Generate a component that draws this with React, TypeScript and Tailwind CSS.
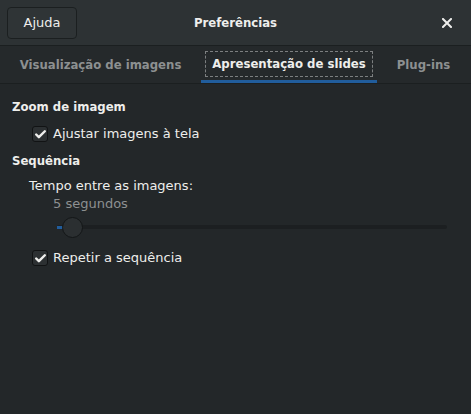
import { Check } from "lucide-react";

const font = { fontFamily: '"DejaVu Sans", sans-serif' };
const boldFont = {
  fontFamily: '"DejaVu Sans Condensed", "DejaVu Sans", sans-serif',
};

function CheckBox({ label }: { label: string }) {
  return (
    <div className="ml-[20px] flex h-[18px] items-center">
      <span className="flex h-[16px] w-[16px] items-center justify-center rounded-[3px] border border-[#111314] bg-[#2c3032]">
        <Check size={13} strokeWidth={4.5} className="text-[#eeeeec]" />
      </span>
      <span className="ml-[5px] text-[13px] text-[#eeeeec]">{label}</span>
    </div>
  );
}

export default function App() {
  return (
    <div
      className="flex h-[414px] w-[471px] flex-col bg-[#232729] text-[#eeeeec]"
      style={font}
    >
      {/* header bar */}
      <div className="grid h-[46px] grid-cols-[1fr_auto_1fr] items-center border-b border-[#1b1f20] bg-[#2d3234] px-[7px]">
        <button className="h-[32px] w-[70px] justify-self-start rounded-[4px] border border-[#1b1f20] bg-[#2f3436] text-[13px] text-[#eeeeec]">
          Ajuda
        </button>
        <span className="text-[13px] font-bold" style={boldFont}>
          Preferências
        </span>
        <span className="mr-[9px] flex h-[16px] w-[16px] items-center justify-center justify-self-end">
          <svg width="10" height="10" viewBox="0 0 10 10">
            <path
              d="M1 1 L9 9 M9 1 L1 9"
              stroke="#eeeeec"
              strokeWidth="2"
              strokeLinecap="square"
            />
          </svg>
        </span>
      </div>

      {/* tabs */}
      <div
        className="flex h-[38px] items-stretch border-b border-[#1b1f20] bg-[#25292b] pl-[8px] text-[13px] font-bold"
        style={boldFont}
      >
        <div className="flex w-[185px] items-center justify-center text-[#8d9091]">
          Visualização de imagens
        </div>
        <div className="ml-[8px] flex w-[176px] flex-col">
          <div className="mx-[4px] mt-[5px] flex h-[26px] items-center justify-center border border-dashed border-[#7c7f80] text-[#eeeeec]">
            Apresentação de slides
          </div>
          <div className="mt-auto h-[3px] bg-[#215d9c]" />
        </div>
        <div className="ml-[8px] flex w-[77px] items-center justify-center text-[#8d9091]">
          Plug-ins
        </div>
      </div>

      {/* content */}
      <div className="flex flex-col pl-[12px] pt-[14px] text-[13px]">
        <div className="flex h-[18px] items-center font-bold" style={boldFont}>
          Zoom de imagem
        </div>
        <div className="mt-[9px]">
          <CheckBox label="Ajustar imagens à tela" />
        </div>
        <div className="mt-[9px] flex h-[18px] items-center font-bold" style={boldFont}>
          Sequência
        </div>
        <div className="ml-[17px] mt-[7px] flex h-[18px] items-center">
          Tempo entre as imagens:
        </div>
        <div className="ml-[41px] flex h-[18px] items-center text-[#8d9091]">
          5 segundos
        </div>
        <div className="relative ml-[45px] mr-[24px] mt-[1px] flex h-[26px] items-center">
          <div className="h-[4px] w-full rounded-full bg-[#1c1f21]" />
          <div className="absolute left-0 h-[3px] w-[6px] bg-[#215d9c]" />
          <div className="absolute left-[5px] h-[21px] w-[21px] rounded-full border border-[#131617] bg-[#2b2f31]" />
        </div>
        <div className="mt-[9px]">
          <CheckBox label="Repetir a sequência" />
        </div>
      </div>
    </div>
  );
}
